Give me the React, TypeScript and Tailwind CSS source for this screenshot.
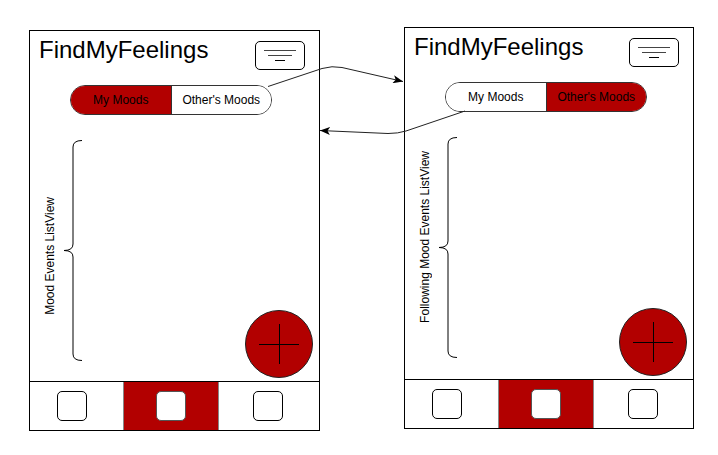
import React from "react";

const RED = "bg-[#b20000]";

function MenuButton() {
  return (
    <div className="mt-[5px] flex h-[29px] w-[50px] flex-col items-center justify-center gap-[4px] rounded-[5px] border border-black bg-white">
      <div className="h-px w-[32px] bg-[#444]" />
      <div className="h-px w-[24px] bg-[#444]" />
      <div className="h-px w-[10px] bg-black" />
    </div>
  );
}

function Toggle({ mine }: { mine: boolean }) {
  return (
    <div className="ml-[40px] mt-[15px] flex h-[30px] w-[202px] overflow-hidden rounded-full border border-[#333] text-[12px] text-black">
      <div className={`flex flex-1 items-center justify-center ${mine ? RED : "bg-white"}`}>My Moods</div>
      <div className={`flex flex-1 items-center justify-center border-l border-[#333] ${mine ? "bg-white" : RED}`}>
        Other's Moods
      </div>
    </div>
  );
}

function Brace() {
  return (
    <svg width="20" height="221" viewBox="0 0 20 221" className="block">
      <path
        d="M19 0.5 Q10 0.5 10 7 L10 104 Q10 110.5 1 110.5 Q10 110.5 10 117 L10 214 Q10 220.5 19 220.5"
        fill="none"
        stroke="black"
        strokeWidth="1"
      />
    </svg>
  );
}

function Fab() {
  return (
    <div className="absolute bottom-[3px] right-[6px] h-[68px] w-[68px] rounded-full border border-[#222] bg-[#b20000]">
      <div className="absolute left-[13px] top-[33px] h-px w-[40px] bg-black" />
      <div className="absolute left-[33px] top-[13px] h-[40px] w-px bg-black" />
    </div>
  );
}

function NavBar() {
  return (
    <div className="grid h-[49px] grid-cols-[93px_96px_1fr] border-t border-black">
      <div className="flex items-center justify-center pr-[9px]">
        <div className="h-[30px] w-[30px] rounded-[5px] border border-black bg-white" />
      </div>
      <div className={`flex items-center justify-center border-x border-[#888] ${RED}`}>
        <div className="h-[30px] w-[30px] rounded-[5px] border border-[#555] bg-white" />
      </div>
      <div className="flex items-center justify-center pr-[2px]">
        <div className="h-[30px] w-[30px] rounded-[5px] border border-black bg-white" />
      </div>
    </div>
  );
}

function Phone({
  mine,
  label,
  labelPad,
  className,
}: {
  mine: boolean;
  label: string;
  labelPad: string;
  className: string;
}) {
  return (
    <div className={`absolute flex flex-col border border-black bg-white ${className}`}>
      <div className="flex items-start justify-between pl-[9px] pr-[14px] pt-[5px]">
        <div className="text-[24px] leading-[28px] text-black">FindMyFeelings</div>
        <MenuButton />
      </div>
      <Toggle mine={mine} />
      <div className="relative flex-1">
        <div className="flex items-start pt-[25px]">
          <div className={`ml-[13px] flex h-[221px] w-[14px] flex-col items-center justify-center ${labelPad}`}>
            <div className="rotate-180 whitespace-nowrap text-[12px] leading-[14px] text-black [writing-mode:vertical-rl]">
              {label}
            </div>
          </div>
          <div className="ml-[6px]">
            <Brace />
          </div>
        </div>
        <Fab />
      </div>
      <NavBar />
    </div>
  );
}

export default function App() {
  return (
    <div
      className="relative h-[455px] w-[718px] overflow-hidden bg-white"
      style={{ fontFamily: '"Liberation Sans", Arial, sans-serif' }}
    >
      <Phone
        mine={true}
        label="Mood Events ListView"
        labelPad="pt-[10px]"
        className="left-[29px] top-[30px] h-[401px] w-[291px]"
      />
      <Phone
        mine={false}
        label="Following Mood Events ListView"
        labelPad="pb-[22px]"
        className="left-[404px] top-[27px] h-[402px] w-[290px]"
      />
      <svg className="pointer-events-none absolute inset-0" width="718" height="455">
        <defs>
          <marker
            id="arr"
            markerUnits="userSpaceOnUse"
            markerWidth="11"
            markerHeight="8"
            refX="10"
            refY="4"
            orient="auto"
          >
            <path d="M0 0 L10 4 L0 8 L2.5 4 Z" fill="black" />
          </marker>
        </defs>
        <path
          d="M268 86.5 L322 68.5 Q332 65.5 342 67.5 L403 81.5"
          fill="none"
          stroke="#222"
          strokeWidth="1"
          markerEnd="url(#arr)"
        />
        <path
          d="M465 111 L406 131 Q398 133.5 388 133.5 L320 130.5"
          fill="none"
          stroke="#222"
          strokeWidth="1"
          markerEnd="url(#arr)"
        />
      </svg>
    </div>
  );
}
